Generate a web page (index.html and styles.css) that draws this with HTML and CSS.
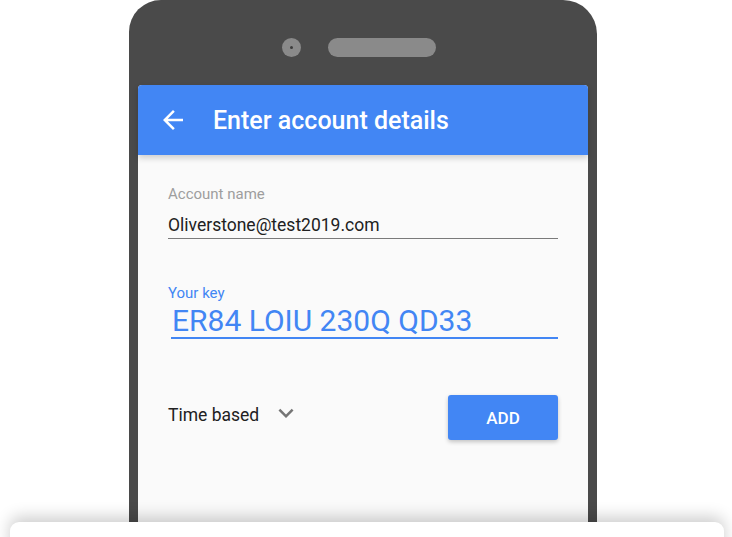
FILE: index.html
```html
<!DOCTYPE html>
<html lang="en">
<head>
<meta charset="utf-8">
<title>Enter account details</title>
<link rel="stylesheet" href="styles.css">
</head>
<body>
<div class="stage">
  <div class="phone">
    <div class="phone-top">
      <div class="camera"><span class="lens"></span></div>
      <div class="speaker"></div>
    </div>
    <div class="screen">
      <header class="appbar">
        <svg class="back" viewBox="0 0 24 24" width="30" height="30" aria-hidden="true">
          <path d="M20 11H7.83l5.59-5.59L12 4l-8 8 8 8 1.41-1.41L7.83 13H20v-2z" fill="#fff"/>
        </svg>
        <h1 class="title">Enter account details</h1>
      </header>
      <div class="content">
        <div class="field">
          <div class="label">Account name</div>
          <div class="value">Oliverstone@test2019.com</div>
        </div>
        <div class="field field-key">
          <div class="label label-active">Your key</div>
          <div class="value value-key">ER84 LOIU 230Q QD33</div>
        </div>
        <div class="actions">
          <div class="select">
            <span class="select-text">Time based</span>
            <svg class="chevron" viewBox="0 0 24 24" width="30" height="30" aria-hidden="true">
              <path d="M16.59 8.59L12 13.17 7.41 8.59 6 10l6 6 6-6z" fill="#757575"/>
            </svg>
          </div>
          <button class="add">ADD</button>
        </div>
      </div>
    </div>
  </div>
  <div class="base"></div>
</div>
</body>
</html>
```
FILE: styles.css
```css
* { box-sizing: border-box; }
html, body {
  margin: 0;
  padding: 0;
  background: #ffffff;
  overflow: hidden;
  font-family: Roboto, "Noto Sans", Arial, sans-serif;
}
.stage {
  width: 732px;
  height: 537px;
  overflow: hidden;
}
.phone {
  margin-left: 129px;
  width: 468px;
  height: 522px;
  background: #4a4a4a;
  border-radius: 32px 34px 0 0;
  display: flex;
  flex-direction: column;
}
.phone-top {
  display: flex;
  align-items: center;
  padding-top: 38px;
  padding-left: 153px;
  gap: 27px;
  height: 57px;
}
.camera {
  width: 19px;
  height: 19px;
  border-radius: 50%;
  background: #8a8a8a;
  display: flex;
  align-items: center;
  justify-content: center;
}
.lens {
  width: 3px;
  height: 3px;
  border-radius: 50%;
  background: #3c3c3c;
}
.speaker {
  width: 108px;
  height: 19px;
  border-radius: 10px;
  background: #8a8a8a;
}
.screen {
  margin: 28px 9px 0;
  flex: 1;
  background: #fafafa;
  border-radius: 4px 4px 0 0;
  display: flex;
  flex-direction: column;
}
.appbar {
  height: 70px;
  background: #4286f4;
  border-radius: 4px 4px 0 0;
  display: flex;
  align-items: center;
  padding-left: 20px;
  box-shadow: 0 3px 6px rgba(0, 0, 0, 0.18);
  position: relative;
  z-index: 1;
}
.back { display: block; }
.title {
  margin: 0 0 0 25px;
  font-size: 25px;
  font-weight: 500;
  color: #ffffff;
  line-height: 28px;
  padding-top: 1px;
}
.content {
  padding: 30px 30px 0;
  display: flex;
  flex-direction: column;
}
.label {
  font-size: 15px;
  line-height: 18px;
  color: #9e9e9e;
}
.label-active { color: #4286f4; }
.value {
  margin-top: 11px;
  font-size: 17.5px;
  line-height: 22px;
  color: #212121;
  padding-bottom: 2px;
  border-bottom: 1px solid #7a7a7a;
}
.field-key { margin-top: 45px; }
.value-key {
  margin-top: 3px;
  margin-left: 3px;
  padding-left: 1px;
  padding-bottom: 0;
  font-size: 30px;
  line-height: 32px;
  color: #4286f4;
  border-bottom: 2px solid #4286f4;
}
.actions {
  margin-top: 56px;
  display: flex;
  justify-content: space-between;
  align-items: flex-start;
}
.select {
  display: flex;
  align-items: flex-start;
}
.select-text {
  margin-top: 9px;
  font-size: 17.5px;
  line-height: 22px;
  color: #212121;
}
.chevron {
  display: block;
  margin-left: 12px;
  margin-top: 3px;
}
.add {
  width: 110px;
  height: 45px;
  border: none;
  border-radius: 3px;
  background: #4286f4;
  color: #ffffff;
  font-family: Roboto, "Noto Sans", Arial, sans-serif;
  font-size: 17px;
  font-weight: 500;
  padding: 0;
  box-shadow: 0 2px 4px rgba(0, 0, 0, 0.22);
}
.base {
  position: relative;
  z-index: 2;
  margin-left: 10px;
  width: 714px;
  height: 40px;
  background: #ffffff;
  border-radius: 9px 9px 0 0;
  box-shadow: 0 -5px 16px rgba(0, 0, 0, 0.2);
}
```
